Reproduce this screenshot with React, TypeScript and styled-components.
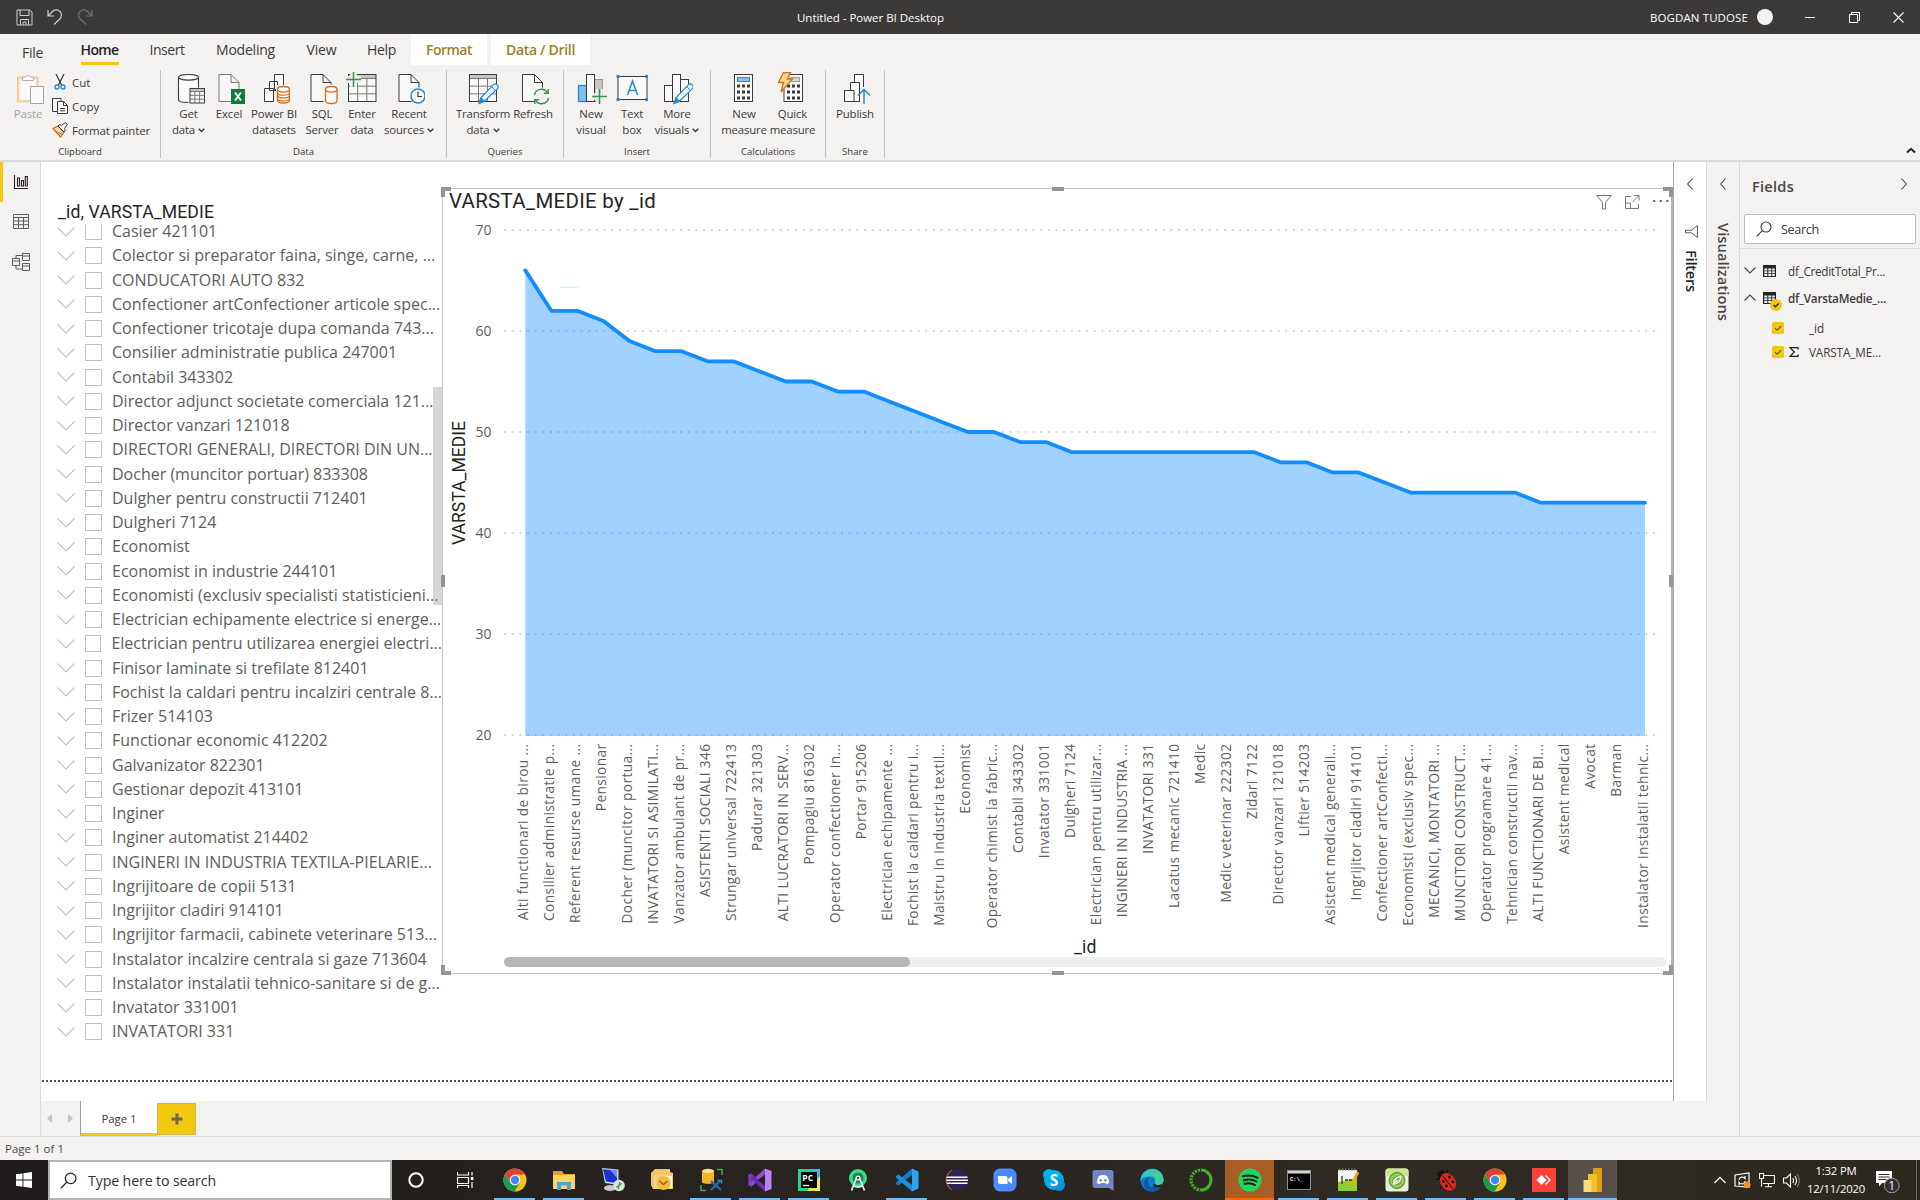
import React, { useLayoutEffect, useRef } from 'react';
import styled, { createGlobalStyle, css } from 'styled-components';

const UI = `"Open Sans", "Noto Sans", sans-serif`;
const DIN = `Roboto, "Open Sans", sans-serif`;

const Global = createGlobalStyle`
  * { box-sizing: border-box; }
  html, body { margin: 0; padding: 0; }
  body { width: 1920px; height: 1200px; overflow: hidden; font-family: ${UI}; color: #252423; }
  svg { display: block; flex: none; }
`;

/* ---------- text that is spaced to a given width ---------- */

const FitSpan = styled.span`
  display: inline-block;
  white-space: nowrap;
`;

function Fit({ w, children }: { w: number; children: string }) {
  const ref = useRef<HTMLSpanElement>(null);
  useLayoutEffect(() => {
    const el = ref.current!;
    el.style.letterSpacing = '0px';
    const vertical = getComputedStyle(el).writingMode !== 'horizontal-tb';
    const box = el.getBoundingClientRect();
    const natural = vertical ? box.height : box.width;
    const gap = (w - natural) / children.length;
    el.style.letterSpacing = `${gap}px`;
  }, [w, children]);
  return <FitSpan ref={ref}>{children}</FitSpan>;
}

/* ---------- shell ---------- */

const Screen = styled.div`
  width: 1920px;
  height: 1200px;
  display: flex;
  flex-direction: column;
  background: #f3f2f1;
  overflow: hidden;
`;

const TitleBar = styled.header`
  height: 34px;
  background: #3b3a39;
  color: #fff;
  display: flex;
  align-items: center;
  font-size: 11.5px;
`;
const QuickAccess = styled.div`
  width: 797px;
  display: flex;
  gap: 14px;
  padding-left: 16px;
`;
const Account = styled.div`
  margin-left: auto;
  display: flex;
  align-items: center;
  gap: 9px;
`;
const Avatar = styled.div`
  width: 16px;
  height: 16px;
  border-radius: 50%;
  background: #f3f2f1;
`;
const WindowButtons = styled.div`
  display: flex;
  margin-left: 15px;
`;
const WinBtn = styled.div`
  width: 44px;
  display: flex;
  justify-content: center;
`;

/* ---------- ribbon ---------- */

const Ribbon = styled.div`
  height: 128px;
  border-bottom: 2px solid #dcdbda;
  display: flex;
  flex-direction: column;
`;
const TabRow = styled.div`
  height: 31px;
  display: flex;
  font-size: 14px;
`;
const Tab = styled.div<{ $w: number; $gap?: number; $active?: boolean; $tool?: boolean; $drop?: boolean }>`
  width: ${(p) => p.$w}px;
  margin-left: ${(p) => p.$gap || 0}px;
  display: flex;
  justify-content: center;
  line-height: 19px;
  padding-top: ${(p) => (p.$drop ? 9 : 6)}px;
  color: #3b3a39;
  ${(p) => p.$active && css`font-weight: 600; color: #252423;`}
  ${(p) => p.$tool && css`font-weight: 600; background: #fff; color: #9c8224;`}
`;
const ActiveLabel = styled.div`
  height: 25px;
  border-bottom: 3px solid #f2c811;
`;
const Groups = styled.div`
  flex: 1;
  display: flex;
`;
const Group = styled.section<{ $w: number; $pad: number }>`
  width: ${(p) => p.$w}px;
  padding-left: ${(p) => p.$pad}px;
  margin-top: 5px;
  height: 88px;
  border-right: 1px solid #c4c2c0;
  display: flex;
  flex-direction: column;
`;
const GroupBody = styled.div`
  height: 77px;
  display: flex;
`;
const GroupName = styled.div<{ $pad: number }>`
  margin-left: -${(p) => p.$pad}px;
  text-align: center;
  font-size: 9.6px;
  line-height: 13px;
  color: #3b3a39;
`;
const BigBtn = styled.div<{ $w: number; $off?: boolean }>`
  width: ${(p) => p.$w}px;
  padding-top: 2px;
  display: flex;
  flex-direction: column;
  align-items: center;
  font-size: 11.4px;
  line-height: 16px;
  color: ${(p) => (p.$off ? '#a8a6a4' : '#3b3a39')};
  white-space: nowrap;
  & > svg { margin-bottom: 1px; }
`;
const Line = styled.div`
  display: flex;
  align-items: center;
  gap: 3px;
  height: 16px;
  letter-spacing: -0.15px;
`;
const SmallCol = styled.div`
  display: flex;
  flex-direction: column;
`;
const SmallBtn = styled.div`
  height: 24px;
  display: flex;
  align-items: center;
  gap: 4px;
  font-size: 11.5px;
  color: #3b3a39;
`;
const CollapseSlot = styled.div`
  margin-left: auto;
  padding: 82px 4px 0 0;
`;

/* ---------- workspace ---------- */

const Work = styled.main`
  height: 974px;
  display: flex;
`;
const NavRail = styled.nav`
  width: 41px;
  border-right: 1px solid #dcdbda;
  display: flex;
  flex-direction: column;
`;
const NavItem = styled.div<{ $on?: boolean }>`
  height: 40px;
  display: flex;
  align-items: center;
  padding-left: ${(p) => (p.$on ? 9 : 12)}px;
  border-left: ${(p) => (p.$on ? '3px solid #f2c811' : '0')};
`;
const Center = styled.div`
  width: 1666px;
  display: flex;
  flex-direction: column;
`;
const CenterTop = styled.div`
  height: 939px;
  display: flex;
  background: #fff;
`;
const Canvas = styled.div`
  width: 1632px;
  height: 939px;
  display: flex;
  flex-direction: column;
`;
const Visuals = styled.div`
  height: 918px;
  display: flex;
`;
const DottedEdge = styled.div`
  height: 2px;
  margin-left: 1px;
  background: repeating-linear-gradient(90deg, #4f4e4d 0 2px, #fff 2px 4px);
`;

/* slicer */
const Slicer = styled.div`
  width: 401px;
  padding: 38px 0 0 16px;
  position: relative;
`;
const SlicerTitle = styled.div`
  height: 24px;
  padding-left: 1px;
  font: 17.6px/24px ${DIN};
  color: #252423;
`;
const SlicerList = styled.div`
  height: 832px;
  overflow: hidden;
`;
const SlicerRow = styled.div`
  height: 24.26px;
  display: flex;
  align-items: center;
  font-size: 16px;
  line-height: 15px;
  color: #605e5c;
  white-space: nowrap;
  &:first-child { margin-top: -4.6px; }
`;
const CheckBox = styled.div`
  width: 17px;
  height: 17px;
  border: 1px solid #c4c0be;
  margin: 0 10px 0 10px;
`;
const ScrollThumb = styled.div`
  position: absolute;
  right: 0;
  top: 225px;
  width: 9px;
  height: 218px;
  background: rgba(150, 150, 150, 0.38);
`;

/* selected chart */
const VisualFrame = styled.div`
  position: relative;
  margin-top: 26px;
  width: 1231px;
  height: 786px;
  border: 1px solid #c4c4c4;
  border-right: 2px solid #b5b5b5;
`;
const VisualHead = styled.div`
  height: 30px;
  display: flex;
  padding-left: 6px;
  font: 20.4px/24px ${DIN};
  color: #252423;
`;
const HeadIcons = styled.div`
  margin: 6px 2px 0 auto;
  display: flex;
  gap: 13px;
`;
const HScroll = styled.div`
  margin-left: 61px;
  width: 1162px;
  height: 10px;
  border-radius: 5px;
  background: #efefef;
`;
const HThumb = styled.div`
  width: 406px;
  height: 10px;
  border-radius: 5px;
  background: #b6b6b6;
`;
const Handle = styled.i<{ $v: 't' | 'm' | 'b'; $h: 'l' | 'c' | 'r' }>`
  position: absolute;
  ${(p) => (p.$v === 't' ? 'top: -2px;' : p.$v === 'b' ? 'bottom: -2px;' : 'top: 386px;')}
  ${(p) => (p.$h === 'l' ? 'left: -2px;' : p.$h === 'r' ? 'right: -2px;' : 'left: 609px;')}
  width: ${(p) => (p.$v === 'm' ? 4 : p.$h === 'c' ? 12 : 10)}px;
  height: ${(p) => (p.$v === 'm' ? 12 : p.$h === 'c' ? 4 : 10)}px;
  border: 0 solid #959595;
  ${(p) => (p.$v === 'm' || p.$h === 'c') && css`background: #959595;`}
  ${(p) => p.$v === 't' && css`border-top-width: 4px;`}
  ${(p) => p.$v === 'b' && css`border-bottom-width: 4px;`}
  ${(p) => p.$v !== 'm' && p.$h === 'l' && css`border-left-width: 4px;`}
  ${(p) => p.$v !== 'm' && p.$h === 'r' && css`border-right-width: 4px;`}
`;

/* collapsed panes */
const FilterPane = styled.aside`
  width: 34px;
  background: #fff;
  border-left: 1px solid #a6a6a6;
  border-right: 1px solid #dcdbda;
  display: flex;
  flex-direction: column;
  align-items: center;
  padding-top: 16px;
`;
const VizPane = styled.aside`
  width: 33px;
  border-right: 1px solid #dcdbda;
  display: flex;
  flex-direction: column;
  align-items: center;
  padding-top: 16px;
`;
const VerticalLabel = styled.div<{ $top: number; $ink: string; $left?: number }>`
  margin-top: ${(p) => p.$top}px;
  padding-left: ${(p) => p.$left || 0}px;
  writing-mode: vertical-rl;
  font-size: 14.6px;
  font-weight: 600;
  line-height: 20px;
  color: ${(p) => p.$ink};
`;
const FilterGlyph = styled.div`
  margin-top: 35px;
  padding-left: 2px;
`;

/* fields pane */
const Fields = styled.aside`
  width: 180px;
  display: flex;
  flex-direction: column;
`;
const FieldsHead = styled.div`
  height: 52px;
  padding: 0 13px 4px 12px;
  display: flex;
  align-items: center;
  justify-content: space-between;
  font-size: 14.6px;
  font-weight: 600;
  color: #484644;
  & > svg { margin-bottom: 4px; }
`;
const SearchBox = styled.div`
  margin: 0 4px;
  height: 30px;
  border: 1px solid #bebbb8;
  border-radius: 2px;
  background: #fff;
  display: flex;
  align-items: center;
  gap: 9px;
  padding-left: 11px;
  font-size: 12.6px;
  color: #3b3a39;
`;
const FieldTree = styled.div`
  margin-top: 4px;
  border-top: 1px solid #dcdbda;
  padding-top: 8px;
  font-size: 11.7px;
  color: #3b3a39;
`;
const TableRow = styled.div<{ $bold?: boolean }>`
  height: 27px;
  display: flex;
  align-items: center;
  padding-left: 4px;
  font-weight: ${(p) => (p.$bold ? 600 : 400)};
`;
const TableGlyph = styled.div`
  position: relative;
  margin: 0 12px 0 7px;
`;
const Tick = styled.div`
  position: absolute;
  left: 7px;
  top: 7px;
`;
const FieldList = styled.div`
  padding-top: 5px;
`;
const FieldRow = styled.div`
  height: 24px;
  display: flex;
  align-items: center;
  padding-left: 32px;
`;
const SigmaSlot = styled.div`
  width: 25px;
  padding-left: 5px;
`;

/* page tabs + status */
const PageStrip = styled.div`
  height: 35px;
  display: flex;
  align-items: center;
`;
const Arrows = styled.div`
  width: 39px;
  display: flex;
  justify-content: space-between;
  padding: 0 7px 0 6px;
`;
const PageTab = styled.div`
  width: 77px;
  height: 35px;
  background: #fff;
  border-left: 1px solid #a19f9d;
  border-bottom: 3px solid #f2c811;
  font-size: 11.4px;
  line-height: 35px;
  text-align: center;
  color: #3b3a39;
`;
const AddPage = styled.div`
  width: 39px;
  height: 32px;
  background: #f2c811;
  border: 1px solid #d2ba45;
  display: flex;
  align-items: center;
  justify-content: center;
`;
const StatusBar = styled.footer`
  height: 24px;
  border-top: 1px solid #dcdbda;
  padding-left: 5px;
  font-size: 11.3px;
  line-height: 23px;
  color: #484644;
`;

/* ---------- taskbar ---------- */

const TaskBar = styled.div`
  height: 40px;
  background: linear-gradient(90deg, #1f1c1b, #292420 45%, #2f2a23 75%, #2c271f);
  display: flex;
  color: #fff;
`;
const Start = styled.div`
  width: 48px;
  display: flex;
  align-items: center;
  padding-left: 16px;
`;
const TaskSearch = styled.div`
  width: 344px;
  border: 2px solid #b3b3b3;
  background: #fff;
  display: flex;
  align-items: center;
  gap: 11px;
  padding-left: 10px;
  color: #333;
  font-size: 14.2px;
`;
const Slot = styled.div<{ $w: number }>`
  width: ${(p) => p.$w}px;
  display: flex;
  align-items: center;
  justify-content: center;
`;
const AppSlot = styled.div<{ $run?: boolean; $bg?: string; $line?: string; $full?: boolean }>`
  width: 49px;
  height: 40px;
  display: flex;
  align-items: center;
  justify-content: center;
  position: relative;
  background: ${(p) => p.$bg || 'transparent'};
  &::after {
    content: '';
    display: ${(p) => (p.$run ? 'block' : 'none')};
    position: absolute;
    bottom: 0;
    left: ${(p) => (p.$full ? 0 : 4)}px;
    right: ${(p) => (p.$full ? 0 : 4)}px;
    height: 2px;
    background: ${(p) => p.$line || '#76b9ed'};
  }
`;
const Tray = styled.div`
  margin-left: auto;
  display: flex;
  align-items: center;
  padding-right: 3px;
`;
const TrayIcons = styled.div`
  display: flex;
  align-items: center;
  gap: 8px;
`;
const Clock = styled.div`
  width: 72px;
  margin-right: 3px;
  text-align: center;
  font-size: 11.3px;
  line-height: 18.5px;
`;
const ShowDesktop = styled.div`
  width: 1px;
  height: 40px;
  background: #6c6862;
  margin-left: 16px;
`;

/* ---------- icons ---------- */

const K = '#3b3a39';
const B = '#2b88c8';
const G = '#3a9150';
const O = '#d0701c';

function Svg({ w = 32, h = 32, vb, children }: { w?: number; h?: number; vb?: string; children: React.ReactNode }) {
  return (
    <svg width={w} height={h} viewBox={vb || `0 0 ${w} ${h}`} fill="none">
      {children}
    </svg>
  );
}

const Caret = () => (
  <Svg w={7} h={5}><path d="M.7.8 3.5 3.6 6.3.8" stroke={K} strokeWidth="1.4" /></Svg>
);

const page = (x: number) => (
  <path d={`M${x + 0.5} 2.5h12l8 8V29.5h-20zM${x + 12.5} 2.5v8h8`} fill="#fafafa" stroke={K} />
);
const grid = (x: number, y: number, w: number, h: number, head: number, c = K) => (
  <>
    <rect x={x} y={y} width={w} height={h} fill="#fafafa" />
    <rect x={x} y={y} width={w} height={head} fill="#c8c6c4" />
    <path
      d={`M${x} ${y + head}h${w}M${x} ${y + head + (h - head) / 3}h${w}M${x} ${y + head + (2 * (h - head)) / 3}h${w}M${x + w / 3} ${y + head}v${h - head}M${x + (2 * w) / 3} ${y + head}v${h - head}`}
      stroke="#797775"
    />
    <rect x={x} y={y} width={w} height={h} stroke={c} />
  </>
);
const pencil = (x: number, y: number) => (
  <g transform={`translate(${x} ${y})`}>
    <path d="M1 20.5l2-6L15.5 1.6q2-1.6 3.8.2t.1 3.8L6.5 18.2z" fill="#e8f3fb" stroke={B} strokeWidth="1.2" />
    <path d="M1 20.5l2-6 3.6 3.7z" fill={B} stroke={B} />
    <path d="M13.6 3.6l3.7 3.8" stroke={B} />
  </g>
);
const cyl = (x: number, y: number, w: number, h: number, c: string, rings = 0) => (
  <g stroke={c} strokeWidth={c === O ? 1.3 : 1.1}>
    <path d={`M${x} ${y + 2.8}v${h - 5.6}c0 3.7 ${w} 3.7 ${w} 0v-${h - 5.6}`} fill="#fbfbfb" />
    <ellipse cx={x + w / 2} cy={y + 2.8} rx={w / 2} ry={2.8} fill="#fbfbfb" />
    {Array.from({ length: rings }, (_, i) => (
      <path key={i} d={`M${x} ${y + 3 + ((i + 1) * (h - 5)) / (rings + 1)}c0 3.6 ${w} 3.6 ${w} 0`} />
    ))}
  </g>
);
const refreshArrows = (cx: number, cy: number) => (
  <g transform={`translate(${cx} ${cy})`} stroke={G} strokeWidth="1.4">
    <circle r="9" fill="#f3f2f1" stroke="none" />
    <path d="M-7-1.5A7 7 0 0 1 6-3.6M7 1.5A7 7 0 0 1-6 3.6M6.7-7.5v4.2H2.4M-6.7 7.5V3.3h4.3" />
  </g>
);
const keys = (x: number, y: number, dx: number, dy: number) =>
  [0, 1, 2].flatMap((r) => [0, 1, 2].map((c) => (
    <rect key={`${r}${c}`} x={x + c * dx} y={y + r * dy} width="3" height="3" fill={K} />
  )));

const icons: Record<string, React.ReactNode> = {
  paste: (
    <>
      <path d="M5.8 5.5h20v24h-20z" fill="#fae7cd" stroke="#f0c898" strokeWidth="1.6" />
      <path d="M8.5 8h15v19.500h-15z" fill="#fafafa" />
      <path d="M10.500 8.500V5h3.200a2.500 2.500 0 0 1 4.600 0h3.200v3.500z" fill="#fafafa" stroke="#b3b1af" />
      <path d="M18.500 14.500h13v17h-13z" fill="#fafafa" stroke="#a6a4a2" />
    </>
  ),
  get: (<>{cyl(5.5, 2.5, 20, 28, K)}<path d="M15.500 15.500h17v17h-17z" fill="#f3f2f1" />{grid(17, 16.5, 14.500, 14.500, 3)}</>),
  excel: (
    <>
      <g opacity=".65">{page(5.5)}</g>
      <rect x="18" y="17" width="14" height="15" fill="#107c41" />
      <path d="M22 20.500l6 8M28 20.500l-6 8" stroke="#fff" strokeWidth="2" />
    </>
  ),
  datasets: (
    <>
      <path d="M16.500 2.500h9v15h-9zM11.500 9.500h8v9h-8zM6.500 16.500h9v13h-9z" fill="#fafafa" stroke={K} />
      <path d="M18 13h16v19H18z" fill="#f3f2f1" />
      {cyl(19.5, 14.5, 12, 16.5, O, 3)}
    </>
  ),
  sql: (<>{page(4.5)}<path d="M17.500 12.500h15v20h-15z" fill="#f3f2f1" />{cyl(19.5, 14.5, 11.5, 17, O)}</>),
  enter: (
    <>
      {grid(2.5, 2.5, 27.500, 27, 4)}
      <path d="M0 4h15v7H0zM4 0h7v15H4z" fill="#f3f2f1" opacity=".9" />
      <path d="M0 7.500h15M7.500 0v15" stroke={G} strokeWidth="1.500" />
    </>
  ),
  recent: (
    <>
      {page(5.5)}
      <circle cx="25" cy="24" r="8.500" fill="#f3f2f1" />
      <circle cx="25" cy="24" r="7" fill="#fafafa" stroke={B} strokeWidth="1.500" />
      <path d="M25 19.500v5h4" stroke={K} strokeWidth="1.200" />
    </>
  ),
  transform: (<>{grid(2.5, 2.5, 27, 27, 4)}{pencil(11, 11)}</>),
  refresh: (<>{page(5)}{refreshArrows(24.5, 24.5)}</>),
  newvisual: (
    <>
      <rect x="3.500" y="13.500" width="8" height="16" fill="#83beec" stroke={B} strokeWidth="1.300" />
      <rect x="19.500" y="7.500" width="8" height="22" fill="#c8c6c4" stroke="#979593" />
      <rect x="11.500" y="2.500" width="8" height="27" fill="#fafafa" stroke={K} />
      <path d="M17 21h15v7H17zM21 17h7v15h-7z" fill="#f3f2f1" opacity=".8" />
      <path d="M17 24.500h15M24.500 17v15" stroke={G} strokeWidth="1.500" />
    </>
  ),
  textbox: (
    <>
      <rect x="2" y="4.500" width="29" height="23" fill="#fafafa" stroke={K} />
      <path d="M.5 3h3v3h-3zM29 3h3v3h-3zM.5 26h3v3h-3zM29 26h3v3h-3z" fill={B} />
      <path d="M11.500 23 16.500 9l5 14M13.200 18.500h6.600" stroke={B} strokeWidth="1.500" />
    </>
  ),
  morevisuals: (
    <>
      <rect x="3.500" y="13.500" width="8" height="16" fill="#fafafa" stroke={K} />
      <rect x="19.500" y="7.500" width="8" height="22" fill="#fafafa" stroke={K} />
      <rect x="11.500" y="2.500" width="8" height="27" fill="#fafafa" stroke={K} />
      {pencil(12, 11)}
    </>
  ),
  calc: (
    <>
      <rect x="6.500" y="2.500" width="18" height="27" fill="#fafafa" stroke={K} />
      <rect x="9.500" y="5.500" width="12" height="4" fill="#83beec" stroke={B} />
      {keys(9, 12.5, 5, 6)}
    </>
  ),
  quick: (
    <>
      <rect x="7" y="2.500" width="18.500" height="27" fill="#fafafa" stroke={K} />
      <rect x="13" y="5.500" width="9.500" height="4" fill="#d8d6d4" stroke="#a19f9d" />
      {keys(10, 12.5, 5, 6)}
      <path d="M6.500.5h7L10.500 7h5L4 20l2.500-9.500H1.500z" fill="#fbd38a" stroke={O} strokeWidth="1.300" />
    </>
  ),
  publish: (
    <>
      <path d="M15.500 2.500h9v27h-9z" fill="#fafafa" stroke={K} />
      <path d="M11.500 10.500h9v19h-9z" fill="#fafafa" stroke={K} />
      <path d="M5.500 18.500h9.500v11H5.500z" fill="#fafafa" stroke={K} />
      <path d="M21 15h7v17h-7z" fill="#f3f2f1" />
      <path d="M25 32V17.500M19 23.500l6-6 6 6" stroke={B} strokeWidth="1.500" />
    </>
  ),
};

const CutIcon = () => (
  <Svg w={16} h={16}>
    <path d="M4 0l5.500 11M12 0L6.500 11" stroke={K} strokeWidth="1.300" />
    <circle cx="5" cy="13" r="2" stroke={B} strokeWidth="1.400" />
    <circle cx="11" cy="13" r="2" stroke={B} strokeWidth="1.400" />
  </Svg>
);
const CopyIcon = () => (
  <Svg w={16} h={16}>
    <path d="M.5.500h8.500v13H.5z" fill="#fafafa" stroke={K} />
    <path d="M5.500 3.500h6l4 4v8h-10z" fill="#fafafa" stroke={K} />
    <path d="M11.500 3.500v4h4M8 10.500h5M8 12.800h5" stroke={K} />
  </Svg>
);
const PainterIcon = () => (
  <Svg w={16} h={16}>
    <path d="M1 6.500l5-2.500 6 6-3.500 5z" fill="#fbd9ae" stroke={O} strokeWidth="1.300" />
    <path d="M6 4l1.500-1.300 2 .6L13.500.6 15.300 2.400 12.500 6.500l.7 2L12 10z" fill="#fafafa" stroke={K} />
    <path d="M2.500 9l8 3.500" stroke={O} />
  </Svg>
);
const Chevron = ({ dir, s = 7, c = '#484644' }: { dir: 'l' | 'r' | 'd' | 'u'; s?: number; c?: string }) => {
  const d = {
    l: [s, 2 * s, `M${s - 0.5}.5.7 ${s}l${s - 1.2} ${s - 0.5}`],
    r: [s, 2 * s, `M.5.5l${s - 1.2} ${s - 0.5}L.5 ${2 * s - 0.5}`],
    d: [2 * s, s + 1, `M.5.5l${s - 0.5} ${s - 0.5} ${s - 0.5}-${s - 0.5}`],
    u: [2 * s, s + 1, `M.5 ${s + 0.5}l${s - 0.5}-${s - 0.5} ${s - 0.5} ${s - 0.5}`],
  }[dir] as [number, number, string];
  return <Svg w={d[0]} h={d[1]}><path d={d[2]} stroke={c} strokeWidth="1.100" /></Svg>;
};
const Lens = ({ s, c, sw = 1.1 }: { s: number; c: string; sw?: number }) => (
  <Svg w={s} h={s} vb="0 0 16 16">
    <circle cx="10" cy="6" r="5" stroke={c} strokeWidth={sw} />
    <path d="M6.300 9.700.6 15.400" stroke={c} strokeWidth={sw} />
  </Svg>
);
const TableIcon = () => (
  <Svg w={13} h={12}>
    <rect width="13" height="12" fill="#252423" />
    <path d="M1.300 3.500h3v2h-3zM5.300 3.500h3v2h-3zM9.200 3.500h2.600v2H9.200zM1.300 6.300h3v2h-3zM5.300 6.300h3v2h-3zM9.200 6.300h2.600v2H9.200zM1.300 9.100h3v1.800h-3zM5.300 9.100h3v1.800h-3zM9.200 9.100h2.600v1.800H9.200z" fill="#f3f2f1" />
  </Svg>
);
const YellowCheck = () => (
  <Svg w={12} h={12}>
    <rect width="12" height="12" rx="1.500" fill="#f2c811" />
    <path d="M3 6l2.200 2.200L9.200 4" stroke="#605830" strokeWidth="1.100" />
  </Svg>
);

/* ---------- data ---------- */

const slicerItems = [
  'Casier 421101', 'Colector si preparator faina, singe, carne, ...', 'CONDUCATORI AUTO 832',
  'Confectioner artConfectioner articole spec...', 'Confectioner tricotaje dupa comanda 743...',
  'Consilier administratie publica 247001', 'Contabil 343302', 'Director adjunct societate comerciala 121...',
  'Director vanzari 121018', 'DIRECTORI GENERALI, DIRECTORI DIN UN...', 'Docher (muncitor portuar) 833308',
  'Dulgher pentru constructii 712401', 'Dulgheri 7124', 'Economist', 'Economist in industrie 244101',
  'Economisti (exclusiv specialisti statisticieni...', 'Electrician echipamente electrice si energe...',
  'Electrician pentru utilizarea energiei electri...', 'Finisor laminate si trefilate 812401',
  'Fochist la caldari pentru incalziri centrale 8...', 'Frizer 514103', 'Functionar economic 412202',
  'Galvanizator 822301', 'Gestionar depozit 413101', 'Inginer', 'Inginer automatist 214402',
  'INGINERI IN INDUSTRIA TEXTILA-PIELARIE...', 'Ingrijitoare de copii 5131', 'Ingrijitor cladiri 914101',
  'Ingrijitor farmacii, cabinete veterinare 513...', 'Instalator incalzire centrala si gaze 713604',
  'Instalator instalatii tehnico-sanitare si de g...', 'Invatator 331001', 'INVATATORI 331',
];

const series: [string, number][] = [
  ['Alti functionari de birou ...', 66], ['Consilier administratie p...', 62], ['Referent resurse umane ...', 62],
  ['Pensionar', 61], ['Docher (muncitor portua...', 59], ['INVATATORI SI ASIMILATI...', 58],
  ['Vanzator ambulant de pr...', 58], ['ASISTENTI SOCIALI 346', 57], ['Strungar universal 722413', 57],
  ['Padurar 321303', 56], ['ALTI LUCRATORI IN SERV...', 55], ['Pompagiu 816302', 55],
  ['Operator confectioner in...', 54], ['Portar 915206', 54], ['Electrician echipamente ...', 53],
  ['Fochist la caldari pentru i...', 52], ['Maistru in industria textil...', 51], ['Economist', 50],
  ['Operator chimist la fabric...', 50], ['Contabil 343302', 49], ['Invatator 331001', 49],
  ['Dulgheri 7124', 48], ['Electrician pentru utilizar...', 48], ['INGINERI IN INDUSTRIA ...', 48],
  ['INVATATORI 331', 48], ['Lacatus mecanic 721410', 48], ['Medic', 48], ['Medic veterinar 222302', 48],
  ['Zidari 7122', 48], ['Director vanzari 121018', 47], ['Liftier 514203', 47],
  ['Asistent medical generali...', 46], ['Ingrijitor cladiri 914101', 46], ['Confectioner artConfecti...', 45],
  ['Economisti (exclusiv spec...', 44], ['MECANICI, MONTATORI ...', 44], ['MUNCITORI CONSTRUCT...', 44],
  ['Operator programare 41...', 44], ['Tehnician constructii nav...', 44], ['ALTI FUNCTIONARI DE BI...', 43],
  ['Asistent medical', 43], ['Avocat', 43], ['Barman', 43], ['Instalator instalatii tehnic...', 43],
];

const AxisText = styled.text`
  font-family: ${UI};
  font-size: 14px;
  fill: #605e5c;
`;
const CategoryText = styled(AxisText)`
  font-size: 13.7px;
  letter-spacing: 0.4px;
`;
const AxisTitle = styled.text`
  font-family: ${DIN};
  font-size: 17.6px;
  fill: #252423;
`;

function AreaChart() {
  const x = (i: number) => 525.3 + i * 26.04;
  const y = (v: number) => 230 + (70 - v) * 10.1;
  const line = series.map(([, v], i) => `${i ? 'L' : 'M'}${x(i)} ${y(v)}`).join('');
  return (
    <svg width="1226" height="738" viewBox="443 219 1226 738">
      {[70, 60, 50, 40, 30, 20].map((v) => (
        <g key={v}>
          <path d={`M504 ${y(v)}H1661`} stroke="#c8c8c8" strokeWidth="1.600" strokeDasharray="1.900 5.760" />
          <AxisText x="491.500" y={y(v) + 5} textAnchor="end">{v}</AxisText>
        </g>
      ))}
      <path d="M560 287.300h19" stroke="#c9f1f7" strokeWidth="1.200" />
      <path d={`${line}V736H525.300z`} fill="#118dff" fillOpacity=".4" />
      <path d={line} fill="none" stroke="#118dff" strokeWidth="3.800" strokeLinecap="round" strokeLinejoin="round" />
      {series.map(([name], i) => (
        <CategoryText key={i} textAnchor="end" transform={`translate(${x(i) + 2.5} 743.500) rotate(-90)`}>{name}</CategoryText>
      ))}
      <AxisTitle transform="translate(465.300 545) rotate(-90)" textLength="124">VARSTA_MEDIE</AxisTitle>
      <AxisTitle x="1074" y="953" textLength="22.500">_id</AxisTitle>
    </svg>
  );
}

/* ---------- ribbon parts ---------- */

function Big({ icon, w, lines, caret, off }: { icon: string; w: number; lines: string[]; caret?: boolean; off?: boolean }) {
  return (
    <BigBtn $w={w} $off={off}>
      <Svg vb="0 0 32 33" h={33}>{icons[icon]}</Svg>
      {lines.map((l, i) => (
        <Line key={l}>{l}{caret && i === lines.length - 1 && <Caret />}</Line>
      ))}
    </BigBtn>
  );
}

function RibbonGroup({ name, w, pad, children }: { name: string; w: number; pad: number; children: React.ReactNode }) {
  return (
    <Group $w={w} $pad={pad}>
      <GroupBody>{children}</GroupBody>
      <GroupName $pad={pad}>{name}</GroupName>
    </Group>
  );
}

/* ---------- taskbar app icons (24x24) ---------- */

const chrome = (
  <>
    <circle cx="12" cy="12" r="11.500" fill="#fbc116" />
    <path d="M2 6.200A11.500 11.500 0 0 0 11.500 23.500L17 14.800 12 12 7 14.800z" fill="#1a9c50" />
    <path d="M2 6.200A11.500 11.500 0 0 1 22 6.500H12L7 14.800z" fill="#dc4437" />
    <circle cx="12" cy="12" r="5.300" fill="#fff" />
    <circle cx="12" cy="12" r="4.200" fill="#4285f4" />
  </>
);

const apps: { art: React.ReactNode; run?: boolean; bg?: string; line?: string; full?: boolean }[] = [
  { art: chrome, run: true },
  {
    run: true,
    art: (
      <>
        <path d="M1 3h9l2 3h11v15H1z" fill="#e0a020" />
        <path d="M1 7h22v14H1z" fill="#fcd462" />
        <path d="M5 22v-8h14v8h-4v-4.500H9V22z" fill="#4ba3d9" />
      </>
    ),
  },
  {
    art: (
      <>
        <path d="M1 0l16.500 1.500V17L4 15z" fill="#c5cfdc" />
        <path d="M2 1.200l14 1.500V15L5 13.500z" fill="#1b33d6" />
        <path d="M9 2l7 .7V10z" fill="#6f8df2" />
        <ellipse cx="9" cy="20" rx="6" ry="3" fill="#c8ccd2" />
        <circle cx="18" cy="17.500" r="5.800" fill="#dfe3dd" />
        <path d="M15 19l3-1-1 3M21 15.500l-3 1.500 1-3" stroke="#3c9440" strokeWidth="1.300" />
      </>
    ),
  },
  {
    art: (
      <>
        <path d="M1 5l4-4h15v3l3 1v16H3l-2-4z" fill="#f2c66b" />
        <path d="M4 7l18 1v12H4z" fill="#fff6dc" />
        <path d="M4 7h8l2 3-4 10H4z" fill="#e8b04a" opacity=".5" />
        <circle cx="13.500" cy="15" r="7" fill="#f5b93b" />
        <path d="M9.500 13l4 3.500 4-3.500" stroke="#9b6512" strokeWidth="1.500" />
      </>
    ),
  },
  {
    run: true,
    art: (
      <>
        <path d="M3 3v11c0 2.500 12 2.500 12 0V3z" fill="#f0b429" />
        <ellipse cx="9" cy="3" rx="6" ry="2.200" fill="#ffe08a" />
        <path d="M18 1.500h5V7M2 17v5.500h5" stroke="#4f9d5b" strokeWidth="1.600" />
        <path d="M12 13l10 9M21 13l-9 9" stroke="#1f6fae" strokeWidth="2.200" />
        <path d="M18.500 12.500h4v3" stroke="#2f8ad0" strokeWidth="1.500" />
      </>
    ),
  },
  {
    run: true,
    art: (
      <>
        <path d="M17 .5 23.500 3v18L17 23.500z" fill="#b583f2" />
        <path d="M17 .5V7L3.500 18.500.5 17V15.500z" fill="#8a4fd0" />
        <path d="M17 23.500V17L3.500 5.500.5 7v1.500z" fill="#6a2fb0" />
        <path d="M.5 7v10l3 1.500v-13z" fill="#7b3fc4" />
        <path d="M17 6.500v11L10 12z" fill="#26211e" />
      </>
    ),
  },
  {
    run: true,
    art: (
      <>
        <path d="M1 1h22v22H1z" fill="#21d789" />
        <path d="M12 1h11v14z" fill="#3ab8e8" />
        <path d="M23 8v15H10z" fill="#e8ee4b" />
        <rect x="4" y="4" width="16" height="16" fill="#000" />
        <path d="M6 17.500h6" stroke="#fff" strokeWidth="1.300" />
        <text x="5.300" y="12.500" fontSize="8.500" fontWeight="700" fontFamily='"Open Sans", sans-serif' fill="#fff">PC</text>
      </>
    ),
  },
  {
    art: (
      <>
        <circle cx="12" cy="10" r="9" fill="#3ddc84" />
        <circle cx="12" cy="10" r="5.500" fill="#1d7d54" />
        <path d="M5.500 22.500 11 9h2l5.500 13.500M7 17.500q5 3 10 0" stroke="#dfe9ef" strokeWidth="1.800" />
        <circle cx="12" cy="10" r="2.500" fill="#dfe9ef" />
        <circle cx="12" cy="10" r="1.100" fill="#16302a" />
      </>
    ),
  },
  {
    run: true,
    art: (
      <>
        <path d="M17 .5 23.500 3.500v17L17 23.500z" fill="#2fa4ee" />
        <path d="M17 .5V7L3.500 17.500 1 16V14.500z" fill="#0f7dc7" />
        <path d="M17 23.500V17L3.500 6.500 1 8v1.500z" fill="#1a90dc" />
      </>
    ),
  },
  {
    art: (
      <>
        <path d="M9.500 1.500a11 11 0 0 0 0 21 13 13 0 0 1 0-21z" fill="#f7941e" />
        <circle cx="13" cy="12" r="10.500" fill="#2c2255" />
        <path d="M3 8.500h20.500v1.400H3zM2.600 11.500H24v1.400H2.600zM3 14.500h20.500v1.400H3z" fill="#fff" />
      </>
    ),
  },
  {
    art: (
      <>
        <rect x=".5" y=".5" width="23" height="23" rx="6.500" fill="#4a8cff" />
        <path d="M5 8h7.500a2 2 0 0 1 2 2v6H7a2 2 0 0 1-2-2zM15.300 10.800 19 8v8l-3.700-2.800z" fill="#fff" />
      </>
    ),
  },
  {
    art: (
      <>
        <circle cx="12" cy="12" r="10" fill="#00aff0" />
        <circle cx="7" cy="7" r="6" fill="#00aff0" />
        <circle cx="17" cy="17" r="6" fill="#0b94dc" />
        <text x="12" y="17.500" textAnchor="middle" fontSize="15.500" fontWeight="700" fontFamily='"Open Sans", sans-serif' fill="#fff">S</text>
      </>
    ),
  },
  {
    art: (
      <>
        <path d="M4 2h16a2.500 2.500 0 0 1 2.500 2.500V23L18 20H4a2.500 2.500 0 0 1-2.500-2.500v-13A2.500 2.500 0 0 1 4 2z" fill="#7283c8" />
        <path d="M8 8q4-2 8 0 2.500 4 2 7-2 1.500-3 1l-1-1.300q-2 .6-4 0L9 16q-1.500.2-3-1-.3-4 2-7z" fill="#fff" />
        <circle cx="9.700" cy="12.300" r="1.200" fill="#7283c8" />
        <circle cx="14.300" cy="12.300" r="1.200" fill="#7283c8" />
      </>
    ),
  },
  {
    art: (
      <>
        <circle cx="12" cy="12" r="11.500" fill="#1279cf" />
        <path d="M.6 11A11.500 11.500 0 0 1 23.500 12c0 4-3 5-5.500 5s-4-1.500-3-3.500c.8-3-1.500-5-4.500-5C6 8.500 1.500 9 .6 14z" fill="#2fc3d0" />
        <path d="M14 1q9.500 2 9.500 11c0 4-3 5-5.500 5-3 0-4-1.800-3-3.500 1-4-4-8-10-7Q8 1 14 1z" fill="#4fd08a" opacity=".65" />
        <path d="M15 13.500c-1 2 .5 3.500 3 3.500 2 0 4-.6 5-2l-2 4.500h-8z" fill="#26221d" />
        <path d="M8 13c0 6 5 9 13 6.500-4 4.500-11 5.500-16 .5-3-5 0-10 5-11-1.500 1-2 2.500-2 4z" fill="#0c59a4" />
      </>
    ),
  },
  {
    art: (
      <>
        <circle cx="12" cy="12" r="10" stroke="#43b02a" strokeWidth="3" />
        <path d="M12 2A10 10 0 0 0 12 22" stroke="#26221d" strokeWidth="3.200" strokeDasharray="1 2.200" />
      </>
    ),
  },
  {
    run: true, bg: '#a95e26', line: '#ff6a00', full: true,
    art: (
      <>
        <circle cx="12" cy="12" r="11.500" fill="#1ed760" />
        <path d="M5 8.300q8-2.200 14.500 1.500M5.800 12.200q7-1.900 12.500 1.300M6.500 15.800q6-1.500 10.500 1.200" stroke="#1a1a1a" strokeWidth="2" strokeLinecap="round" />
      </>
    ),
  },
  {
    run: true,
    art: (
      <>
        <rect x=".5" y="2.500" width="23" height="19" fill="#000" stroke="#8d8d8d" />
        <path d="M1 3h22v2.500H1z" fill="#d4d4d4" />
        <text x="3" y="12.500" fontSize="5.500" fontWeight="700" fontFamily='"Liberation Mono", monospace' fill="#fff">C:\_</text>
      </>
    ),
  },
  {
    run: true,
    art: (
      <>
        <path d="M2 2h19v21H2z" fill="#f3f7ea" />
        <path d="M2 14l19-4v13H2z" fill="#8ed12f" />
        <path d="M3 1.500h17" stroke="#777" strokeWidth="2" strokeDasharray="1.500 1.500" />
        <path d="M6 8v8M9 12h3M13 12h3" stroke="#333" strokeWidth="1.300" />
        <path d="M22 4 15 18" stroke="#e8a62b" strokeWidth="2.800" />
      </>
    ),
  },
  {
    run: true,
    art: (
      <>
        <rect x=".5" y=".5" width="23" height="23" rx="3" fill="#e9efe2" />
        <path d="M.5 3.500a3 3 0 0 1 3-3h17a3 3 0 0 1 3 3V8H.5z" fill="#cfe48a" />
        <circle cx="12" cy="12.500" r="8" fill="#7cb342" stroke="#5b9a2c" />
        <circle cx="12" cy="12.500" r="6" stroke="#c8e6a0" strokeWidth=".8" />
        <path d="M8.500 16q0-6.500 7.500-7.500-.5 7-7.500 7.500zM8.500 16l4-4" stroke="#f3f8e8" strokeWidth="1.300" />
      </>
    ),
  },
  {
    run: true,
    art: (
      <>
        <path d="M3 6l4 2M8 1l1 4M2 11l4 0M6 19l3-2M14 2l-2 3" stroke="#111" strokeWidth="1.300" />
        <circle cx="8" cy="6.500" r="4" fill="#161616" />
        <ellipse cx="14" cy="14" rx="7.500" ry="9.500" transform="rotate(-35 14 14)" fill="#d92a1c" />
        <path d="M8.500 7.500 19 21" stroke="#300" strokeWidth="1" />
        <circle cx="9.500" cy="13.500" r="1.400" fill="#111" /><circle cx="15.500" cy="9" r="1.400" fill="#111" />
        <circle cx="12.500" cy="18" r="1.400" fill="#111" /><circle cx="19" cy="14" r="1.400" fill="#111" />
      </>
    ),
  },
  { art: chrome, run: true },
  {
    run: true,
    art: (
      <>
        <path d="M0 0h24v24H0z" fill="#ff4136" />
        <path d="M4.500 12 9.500 7l5 5-5 5zM13 7.800 14 7l5 5-5 5-1-1 4-4z" fill="#fff" />
      </>
    ),
  },
  {
    run: true, bg: '#57504a', full: true,
    art: (
      <>
        <path d="M12 0h9v24h-9z" fill="#dca10f" />
        <path d="M7 6h9v18H7z" fill="#efc02c" />
        <path d="M2.500 12h8v12h-8z" fill="#f9e07a" />
      </>
    ),
  },
];

/* ---------- app ---------- */

export default function App() {
  return (
    <Screen>
      <Global />
      <TitleBar>
        <QuickAccess>
          <Svg w={17} h={17}><path d="M1 1h12.500L16 3V16H1zM4 1v5.500h9V1M4.500 16v-5.500h8V16M7 16v-3h3v3" stroke="#d2d0ce" /></Svg>
          <Svg w={16} h={16}><path d="M1 1v6h6M1 7 5.500 2.500A5.200 5.200 0 0 1 13 9.800L7 15.500" stroke="#d2d0ce" strokeWidth="1.200" /></Svg>
          <Svg w={16} h={16}><path d="M15 1v6H9M15 7 10.500 2.500A5.200 5.200 0 0 0 3 9.800L9 15.500" stroke="#73716f" strokeWidth="1.200" /></Svg>
        </QuickAccess>
        <Fit w={147}>Untitled - Power BI Desktop</Fit>
        <Account><Fit w={98}>BOGDAN TUDOSE</Fit><Avatar /></Account>
        <WindowButtons>
          <WinBtn><Svg w={10} h={10}><path d="M0 5.500h10" stroke="#fff" /></Svg></WinBtn>
          <WinBtn><Svg w={11} h={11}><path d="M.5 2.500h8v8h-8zM2.500 2.500v-2h8v8h-2" stroke="#fff" /></Svg></WinBtn>
          <WinBtn><Svg w={11} h={11}><path d="M.5.500l10 10M10.500.500l-10 10" stroke="#fff" strokeWidth="1.100" /></Svg></WinBtn>
        </WindowButtons>
      </TitleBar>

      <Ribbon>
        <TabRow>
          <Tab $w={65} $drop><Fit w={21}>File</Fit></Tab>
          <Tab $w={69} $active><ActiveLabel><Fit w={38}>Home</Fit></ActiveLabel></Tab>
          <Tab $w={66}><Fit w={35}>Insert</Fit></Tab>
          <Tab $w={91}><Fit w={59}>Modeling</Fit></Tab>
          <Tab $w={61}><Fit w={30}>View</Fit></Tab>
          <Tab $w={59}><Fit w={29}>Help</Fit></Tab>
          <Tab $w={76} $tool><Fit w={46}>Format</Fit></Tab>
          <Tab $w={99} $gap={4} $tool><Fit w={69}>Data / Drill</Fit></Tab>
        </TabRow>
        <Groups>
          <RibbonGroup name="Clipboard" w={161} pad={4}>
            <Big icon="paste" w={48} lines={['Paste']} off />
            <SmallCol>
              <SmallBtn><CutIcon /><Fit w={18.5}>Cut</Fit></SmallBtn>
              <SmallBtn><CopyIcon /><Fit w={27.5}>Copy</Fit></SmallBtn>
              <SmallBtn><PainterIcon /><Fit w={78}>Format painter</Fit></SmallBtn>
            </SmallCol>
          </RibbonGroup>
          <RibbonGroup name="Data" w={286} pad={4}>
            <Big icon="get" w={47} lines={['Get', 'data']} caret />
            <Big icon="excel" w={34} lines={['Excel']} />
            <Big icon="datasets" w={56} lines={['Power BI', 'datasets']} />
            <Big icon="sql" w={40} lines={['SQL', 'Server']} />
            <Big icon="enter" w={40} lines={['Enter', 'data']} />
            <Big icon="recent" w={54} lines={['Recent', 'sources']} caret />
          </RibbonGroup>
          <RibbonGroup name="Queries" w={117} pad={6}>
            <Big icon="transform" w={60} lines={['Transform', 'data']} caret />
            <Big icon="refresh" w={40} lines={['Refresh']} />
          </RibbonGroup>
          <RibbonGroup name="Insert" w={147} pad={5}>
            <Big icon="newvisual" w={44} lines={['New', 'visual']} />
            <Big icon="textbox" w={38} lines={['Text', 'box']} />
            <Big icon="morevisuals" w={52} lines={['More', 'visuals']} caret />
          </RibbonGroup>
          <RibbonGroup name="Calculations" w={115} pad={9}>
            <Big icon="calc" w={48} lines={['New', 'measure']} />
            <Big icon="quick" w={49} lines={['Quick', 'measure']} />
          </RibbonGroup>
          <RibbonGroup name="Share" w={59} pad={0}>
            <Big icon="publish" w={58} lines={['Publish']} />
          </RibbonGroup>
          <CollapseSlot>
            <Svg w={10} h={7}><path d="M1 5.500 5 1.800l4 3.700" stroke="#252423" strokeWidth="2" /></Svg>
          </CollapseSlot>
        </Groups>
      </Ribbon>

      <Work>
        <NavRail>
          <NavItem $on>
            <Svg w={18} h={16}><path d="M2.500 1v13.500H16M5.500 4h2v8h-2zM9.500 6.500h2v5.500h-2zM13.300 2.500h2V12h-2z" stroke="#252423" strokeWidth="1.100" /></Svg>
          </NavItem>
          <NavItem>
            <Svg w={18} h={16}><path d="M1.500.500h15v14h-15zM1.500 3.500h15M1.500 7h15M1.500 10.700h15M6.500 3.500v11M11.500 3.500v11" stroke="#605e5c" /></Svg>
          </NavItem>
          <NavItem>
            <Svg w={19} h={19}><path d="M.5 5.500h7v7h-7zM.5 8h7M10.500.500h7v7h-7zM10.500 3h7M10.500 10.500h7v7h-7zM10.500 13h7M4 5.500V2.500h6.500M4 12.500v3.500h6.500" stroke="#605e5c" /></Svg>
          </NavItem>
        </NavRail>

        <Center>
          <CenterTop>
            <Canvas>
              <Visuals>
                <Slicer>
                  <SlicerTitle><Fit w={156}>_id, VARSTA_MEDIE</Fit></SlicerTitle>
                  <SlicerList>
                    {slicerItems.map((t) => (
                      <SlicerRow key={t}><Chevron dir="d" s={9} c="#c4c2c0" /><CheckBox />{t}</SlicerRow>
                    ))}
                  </SlicerList>
                  <ScrollThumb />
                </Slicer>
                <VisualFrame>
                  <VisualHead>
                    <Fit w={207}>VARSTA_MEDIE by _id</Fit>
                    <HeadIcons>
                      <Svg w={16} h={15}><path d="M.7.5h14.600L9.500 7.300V14h-3V7.300z" stroke="#7a7574" /></Svg>
                      <Svg w={15} h={14}><path d="M6 1.500H.5v12h13V9M.5 8h5v5.500M9 .5h5v5M14 .5 7.500 7" stroke="#7a7574" /></Svg>
                      <Svg w={16} h={14}><path d="M0 5h2.400v2H0zM6.600 5H9v2H6.600zM13.200 5h2.400v2h-2.400z" fill="#7a7574" /></Svg>
                    </HeadIcons>
                  </VisualHead>
                  <AreaChart />
                  <HScroll><HThumb /></HScroll>
                  <Handle $v="t" $h="l" /><Handle $v="t" $h="c" /><Handle $v="t" $h="r" />
                  <Handle $v="m" $h="l" /><Handle $v="m" $h="r" />
                  <Handle $v="b" $h="l" /><Handle $v="b" $h="c" /><Handle $v="b" $h="r" />
                </VisualFrame>
              </Visuals>
              <DottedEdge />
            </Canvas>
            <FilterPane>
              <Chevron dir="l" s={6} />
              <FilterGlyph><Svg w={13} h={13}><path d="M12.500.5v12L6.500 7.800H.5V5.200h6z" stroke="#605e5c" /></Svg></FilterGlyph>
              <VerticalLabel $top={12} $left={3} $ink="#252423"><Fit w={42}>Filters</Fit></VerticalLabel>
            </FilterPane>
          </CenterTop>
          <PageStrip>
            <Arrows>
              <Svg w={6} h={9}><path d="M5 0v9L0 4.500z" fill="#c8c6c4" /></Svg>
              <Svg w={6} h={9}><path d="M1 0v9l5-4.500z" fill="#c8c6c4" /></Svg>
            </Arrows>
            <PageTab><Fit w={35}>Page 1</Fit></PageTab>
            <AddPage><Svg w={12} h={12}><path d="M6 .5v11M.5 6h11" stroke="#6b6650" strokeWidth="3" /></Svg></AddPage>
          </PageStrip>
        </Center>

        <VizPane>
          <Chevron dir="l" s={6} />
          <VerticalLabel $top={33} $left={1} $ink="#484644"><Fit w={98}>Visualizations</Fit></VerticalLabel>
        </VizPane>

        <Fields>
          <FieldsHead><Fit w={42}>Fields</Fit><Chevron dir="r" s={6} /></FieldsHead>
          <SearchBox><Lens s={16} c="#3b3a39" /><Fit w={38}>Search</Fit></SearchBox>
          <FieldTree>
            <TableRow>
              <Chevron dir="d" s={6} /><TableGlyph><TableIcon /></TableGlyph><Fit w={97}>df_CreditTotal_Pr...</Fit>
            </TableRow>
            <TableRow $bold>
              <Chevron dir="u" s={6} />
              <TableGlyph>
                <TableIcon />
                <Tick><Svg w={12} h={12}><circle cx="6" cy="6" r="6" fill="#f2c811" /><path d="M3.500 6l1.800 1.800L8.700 4.500" stroke="#252423" strokeWidth="1.300" /></Svg></Tick>
              </TableGlyph>
              <Fit w={98}>df_VarstaMedie_...</Fit>
            </TableRow>
            <FieldList>
              <FieldRow><YellowCheck /><SigmaSlot /><Fit w={15}>_id</Fit></FieldRow>
              <FieldRow>
                <YellowCheck />
                <SigmaSlot><Svg w={10} h={10}><path d="M9 2.500V.7H1l4.300 4.300L1 9.300h8V7.500" stroke="#252423" strokeWidth="1.300" /></Svg></SigmaSlot>
                <Fit w={72}>VARSTA_ME...</Fit>
              </FieldRow>
            </FieldList>
          </FieldTree>
        </Fields>
      </Work>

      <StatusBar><Fit w={59}>Page 1 of 1</Fit></StatusBar>

      <TaskBar>
        <Start>
          <Svg w={16} h={16}><path d="M0 2.300 6.500 1.400v6.200H0zM7.400 1.300 16 0v7.600H7.400zM0 8.500h6.500v6.200L0 13.800zM7.400 8.500H16V16l-8.600-1.200z" fill="#fff" /></Svg>
        </Start>
        <TaskSearch><Lens s={17} c="#222" sw={1.2} /><Fit w={128}>Type here to search</Fit></TaskSearch>
        <Slot $w={48}><Svg w={16} h={16}><circle cx="8" cy="8" r="6.700" stroke="#fff" strokeWidth="2" /></Svg></Slot>
        <Slot $w={50}>
          <Svg w={17} h={16}><path d="M.5 0v3h11V0M.5 5.500h11v6H.5zM.5 16v-2.500h11V16M15 0v3.500M15 10v6" stroke="#fff" strokeWidth="1.200" /><path d="M13.800 5h2.600v3h-2.600z" fill="#fff" /></Svg>
        </Slot>
        {apps.map((a, i) => (
          <AppSlot key={i} $run={a.run} $bg={a.bg} $line={a.line} $full={a.full}>
            <Svg w={24} h={24}>{a.art}</Svg>
          </AppSlot>
        ))}
        <Tray>
          <TrayIcons>
            <Svg w={12} h={8}><path d="M.5 7 6 1.300 11.500 7" stroke="#fff" strokeWidth="1.200" /></Svg>
            <Svg w={17} h={17}>
              <path d="M1 3l14-2v14L1 14z" stroke="#fff" strokeWidth="1.200" />
              <path d="M5 8a3.300 3.300 0 0 1 6-1.500V4M11 9a3.300 3.300 0 0 1-6 1.500V13" stroke="#fff" strokeWidth="1.200" />
              <circle cx="13" cy="12.800" r="3.500" fill="#f7941d" />
            </Svg>
            <Svg w={16} h={15}><path d="M4 2.500h11.500v8H4M.5.5h4v5h-4zM2.500 5.500v8M9.500 10.500v3M6 13.800h7" stroke="#fff" strokeWidth="1.100" /></Svg>
            <Svg w={17} h={15}><path d="M.5 5h3L7.500 1v13l-4-4h-3zM9.800 5q1.500 2.500 0 5M12 3q3 4.500 0 9" stroke="#fff" strokeWidth="1.100" /><path d="M14.300 1q4 6.500 0 13" stroke="#8c8883" /></Svg>
          </TrayIcons>
          <Clock><Fit w={41}>1:32 PM</Fit><br /><Fit w={58}>12/11/2020</Fit></Clock>
          <Svg w={25} h={26}>
            <path d="M1 4h16v12H7l-3 3.500V16H1z" fill="#fff" />
            <path d="M3.500 7.500h11M3.500 10h11M3.500 12.500h8" stroke="#2f2a23" />
            <circle cx="16.800" cy="18.500" r="7.300" fill="#2f2f2f" stroke="#a5a29e" />
            <text x="16.800" y="22.800" textAnchor="middle" fontSize="12" fontFamily='"Open Sans", sans-serif' fill="#fff">1</text>
          </Svg>
          <ShowDesktop />
        </Tray>
      </TaskBar>
    </Screen>
  );
}
